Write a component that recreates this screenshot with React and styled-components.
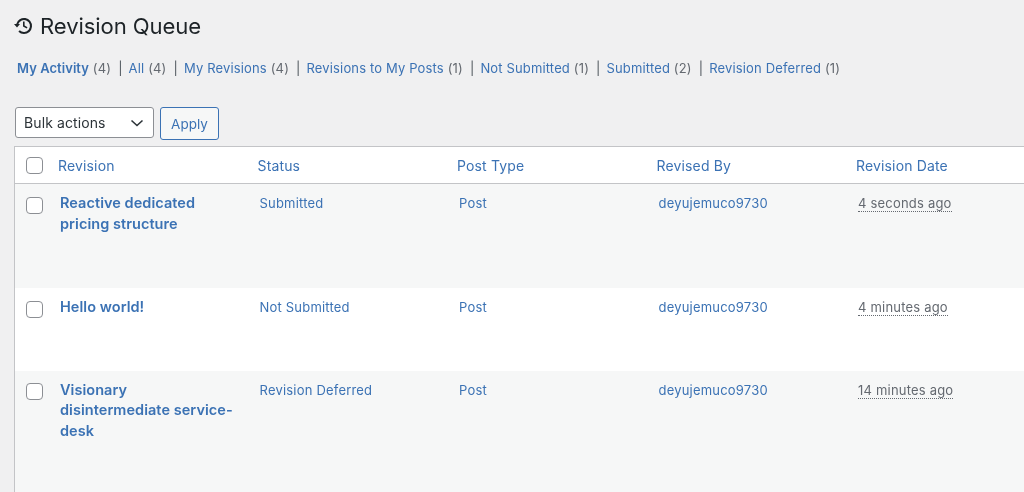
import React from "react";
import styled, { createGlobalStyle } from "styled-components";

const Global = createGlobalStyle`
  html, body { margin: 0; padding: 0; height: 492px; overflow: hidden; background: #f0f0f1; }
  body { font-family: Inter, "Liberation Sans", sans-serif; color: #1d2327; -webkit-font-smoothing: antialiased; }
`;
const Page = styled.div`
  width: 1024px; height: 492px; overflow: hidden; padding: 13px 0 0 14px; box-sizing: border-box; will-change: transform;
`;
const Heading = styled.h1`
  margin: 0; display: flex; align-items: center; gap: 6px; height: 26px;
  font-size: 22.1px; font-weight: 400; color: #1d2327; line-height: 26px; letter-spacing: -0.1px;
`;
const Filters = styled.ul`
  list-style: none; margin: 21px 0 0 3px; padding: 0; display: flex; height: 16px; align-items: center;
  font-size: 13px; line-height: 16px; color: #646970; white-space: nowrap; letter-spacing: 0.15px;
`;
const Filter = styled.li`
  &:not(:last-child)::after { content: "|"; margin: 0 6px 0 7px; color: #50575e; }
`;
const BlueLink = styled.a`
  color: #3b72b4; text-decoration: none; font-weight: ${p => (p.$bold ? 600 : 400)};
  letter-spacing: ${p => (p.$bold ? "0.05px" : "inherit")};
`;
const Toolbar = styled.div`
  display: flex; gap: 6px; margin: 31px 0 0 1px; height: 33px; align-items: flex-start;
`;
const SelectBox = styled.div`
  width: 139px; height: 31px; box-sizing: border-box; border: 1px solid #8c8f94; border-radius: 3px;
  background: #fff; display: flex; align-items: center; justify-content: space-between; padding: 0 8px;
  font-size: 14px; color: #2c3338; letter-spacing: 0.1px;
`;
const ApplyButton = styled.button`
  width: 59px; height: 33px; box-sizing: border-box; border: 1px solid #3b72b4; border-radius: 3px;
  background: #f6f7f7; color: #3b72b4; font: inherit; font-size: 13.5px; padding: 0;
`;
const Table = styled.div`
  width: 1040px; margin-top: 6px; border: 1px solid #c3c4c7; border-right: none; border-bottom: none; background: #fff;
`;
const Columns = "43px 199.5px 199.5px 199.5px 199.5px 198px";
const HeadRow = styled.div`
  display: grid; grid-template-columns: ${Columns}; height: 36px; align-items: center;
  border-bottom: 1px solid #c3c4c7; font-size: 14px; color: #3b72b4; background: #fff; letter-spacing: 0.15px;
`;
const Row = styled.div`
  display: grid; grid-template-columns: ${Columns}; height: ${p => p.$height}px; box-sizing: border-box;
  background: ${p => (p.$alt ? "#f6f7f7" : "#fff")}; font-size: 13px; padding-top: 9px; line-height: 21px;
  align-items: start; letter-spacing: 0.2px;
`;
const CheckCell = styled.div`
  padding-left: 11px; display: flex;
  ${Row} & { padding-top: 3.5px; }
`;
const Check = styled.span`
  width: 17px; height: 17px; box-sizing: border-box; border: 1px solid #8c8f94; border-radius: 4px; background: #fff; display: block;
`;
const TitleLink = styled.a`
  display: block; color: #3b72b4; font-weight: 600; font-size: 14.5px; line-height: 20.5px; padding-left: 2px; width: 176px; letter-spacing: 0.05px;
`;
const Cell = styled.div`
  padding-left: 2px; color: #3b72b4;
`;
const Time = styled.span`
  color: #646970; border-bottom: 1px dotted #646970; line-height: 15px; display: inline-block;
`;
const HistoryIcon = () => (
  <svg width="20" height="20" viewBox="0 0 20 20" fill="#1d2327" aria-hidden="true">
    <path d="M10 18a8 8 0 1 0-7.75-10H0l3 3.4L6 8H4.3A6 6 0 1 1 5.76 14.24l-1.42 1.42A7.97 7.97 0 0 0 10 18z" />
    <path d="M9 5.5h1.6V9.6l2.9 1.7-.8 1.3L9 10.5z" />
  </svg>
);
const Chevron = () => (
  <svg width="16" height="16" viewBox="0 0 16 16" fill="none" stroke="#2c3338" strokeWidth="1.6" aria-hidden="true">
    <path d="M2.5 5.5 8 10.5l5.5-5" />
  </svg>
);

const filters = [
  ["My Activity", 4, true], ["All", 4], ["My Revisions", 4], ["Revisions to My Posts", 1],
  ["Not Submitted", 1], ["Submitted", 2], ["Revision Deferred", 1],
];
const rows = [
  { title: "Reactive dedicated pricing structure", status: "Submitted", time: "4 seconds ago", height: 104, alt: true },
  { title: "Hello world!", status: "Not Submitted", time: "4 minutes ago", height: 82.5 },
  { title: "Visionary disintermediate service-desk", status: "Revision Deferred", time: "14 minutes ago", height: 125, alt: true },
];

export default function App() {
  return (
    <Page>
      <Global />
      <Heading><HistoryIcon />Revision Queue</Heading>
      <Filters>
        {filters.map(([label, n, bold]) => (
          <Filter key={label}><BlueLink $bold={bold}>{label}</BlueLink> ({n})</Filter>
        ))}
      </Filters>
      <Toolbar>
        <SelectBox>Bulk actions<Chevron /></SelectBox>
        <ApplyButton>Apply</ApplyButton>
      </Toolbar>
      <Table>
        <HeadRow>
          <CheckCell><Check /></CheckCell>
          <div>Revision</div><div>Status</div><div>Post Type</div><div>Revised By</div><div>Revision Date</div>
        </HeadRow>
        {rows.map(r => (
          <Row key={r.title} $height={r.height} $alt={r.alt}>
            <CheckCell><Check /></CheckCell>
            <TitleLink>{r.title}</TitleLink>
            <Cell>{r.status}</Cell>
            <Cell>Post</Cell>
            <Cell>deyujemuco9730</Cell>
            <Cell><Time>{r.time}</Time></Cell>
          </Row>
        ))}
      </Table>
    </Page>
  );
}
